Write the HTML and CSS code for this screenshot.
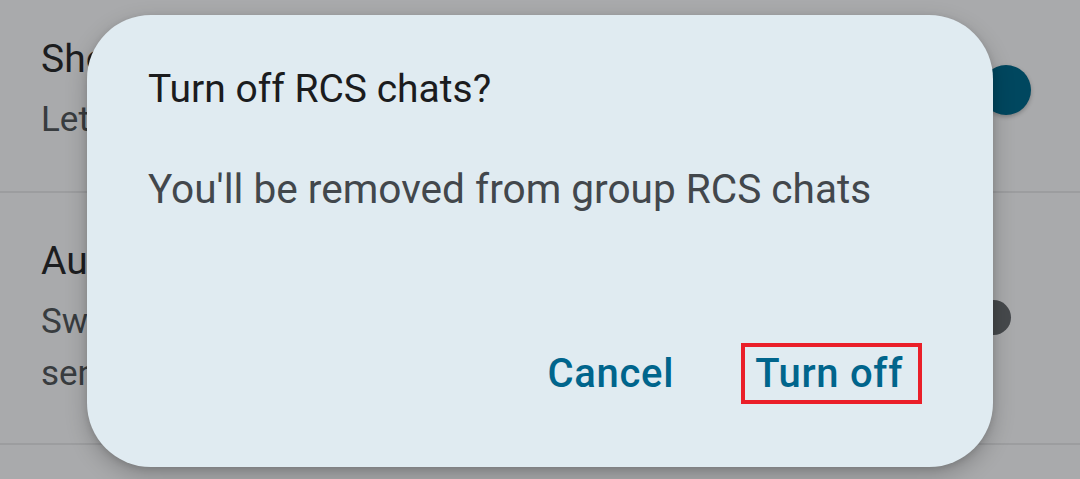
FILE: index.html
```html
<!DOCTYPE html>
<html lang="en">
<head>
<meta charset="utf-8">
<title>RCS chats</title>
<link rel="stylesheet" href="styles.css">
</head>
<body>
  <main class="settings">
    <section class="setting setting--first">
      <div class="setting__text">
        <div class="setting__title">Show typing indicators</div>
        <div class="setting__summary">Let others know when you're typing</div>
      </div>
      <div class="switch switch--on"><span class="switch__thumb"></span></div>
    </section>
    <section class="setting">
      <div class="setting__text">
        <div class="setting__title">Automatically resend as text (SMS/MMS)</div>
        <div class="setting__summary">Switch to SMS/MMS when RCS messages can't be sent</div>
      </div>
      <div class="switch switch--off"><span class="switch__thumb"></span></div>
    </section>
  </main>

  <div class="dialog" role="dialog" aria-labelledby="dialog-title">
    <h2 class="dialog__title" id="dialog-title">Turn off RCS chats?</h2>
    <p class="dialog__body">You'll be removed from group RCS chats</p>
    <div class="dialog__actions">
      <button class="dialog__button" type="button">Cancel</button>
      <button class="dialog__button dialog__button--marked" type="button">Turn off</button>
    </div>
  </div>
</body>
</html>
```

FILE: styles.css
```css
html, body {
  margin: 0;
  padding: 0;
}

body {
  width: 1080px;
  height: 479px;
  overflow: hidden;
  position: relative;
  background: #a9aaac;
  font-family: Roboto, "Liberation Sans", Arial, sans-serif;
}

/* settings list, dimmed behind the scrim */
.settings {
  display: flex;
  flex-direction: column;
}

.setting {
  display: flex;
  align-items: center;
  padding: 42px 0 43px 41px;
  border-bottom: 2px solid #9c9d9f;
}

.setting--first {
  padding-top: 33px;
  padding-bottom: 45px;
}

.setting__text {
  width: 820px;
  display: flex;
  flex-direction: column;
  gap: 9px;
}

.setting__title {
  font-size: 39px;
  line-height: 52px;
  color: #1c1d1f;
}

.setting__summary {
  font-size: 35px;
  line-height: 52px;
  color: #383c3f;
}

.switch {
  margin-left: auto;
  margin-right: 44px;
  width: 64px;
  height: 52px;
  display: flex;
  align-items: center;
}

.switch__thumb {
  display: block;
  border-radius: 50%;
}

.switch--on {
  justify-content: flex-end;
}

.switch--on .switch__thumb {
  width: 50px;
  height: 50px;
  margin-right: 5px;
  background: #00475f;
  box-shadow: 0 2px 4px rgba(0, 0, 0, 0.25);
}

.switch--off .switch__thumb {
  width: 35px;
  height: 35px;
  margin-left: 4px;
  background: #46494c;
}

/* confirmation dialog */
.dialog {
  position: absolute;
  left: 87px;
  top: 15px;
  width: 906px;
  height: 452px;
  box-sizing: border-box;
  padding: 48px 71px 63px 61px;
  display: flex;
  flex-direction: column;
  background: #e0ebf1;
  border-radius: 64px;
  box-shadow: 0 8px 22px rgba(0, 0, 0, 0.22), 0 2px 6px rgba(0, 0, 0, 0.12);
}

.dialog__title {
  margin: 0;
  font-size: 39px;
  line-height: 52px;
  font-weight: 400;
  color: #1b1c1e;
}

.dialog__body {
  margin: 48px 0 0;
  font-size: 40.6px;
  line-height: 52px;
  color: #42474c;
}

.dialog__actions {
  margin-top: auto;
  display: flex;
  justify-content: flex-end;
  align-items: center;
  gap: 48px;
}

.dialog__button {
  height: 61px;
  box-sizing: border-box;
  padding: 0 15px 0 10px;
  border: 4px solid transparent;
  background: none;
  font-family: Roboto, "Liberation Sans", Arial, sans-serif;
  font-size: 40px;
  font-weight: 500;
  line-height: 53px;
  letter-spacing: 0.7px;
  color: #00658c;
}

.dialog__button--marked {
  border-color: #ea1f29;
}
```
